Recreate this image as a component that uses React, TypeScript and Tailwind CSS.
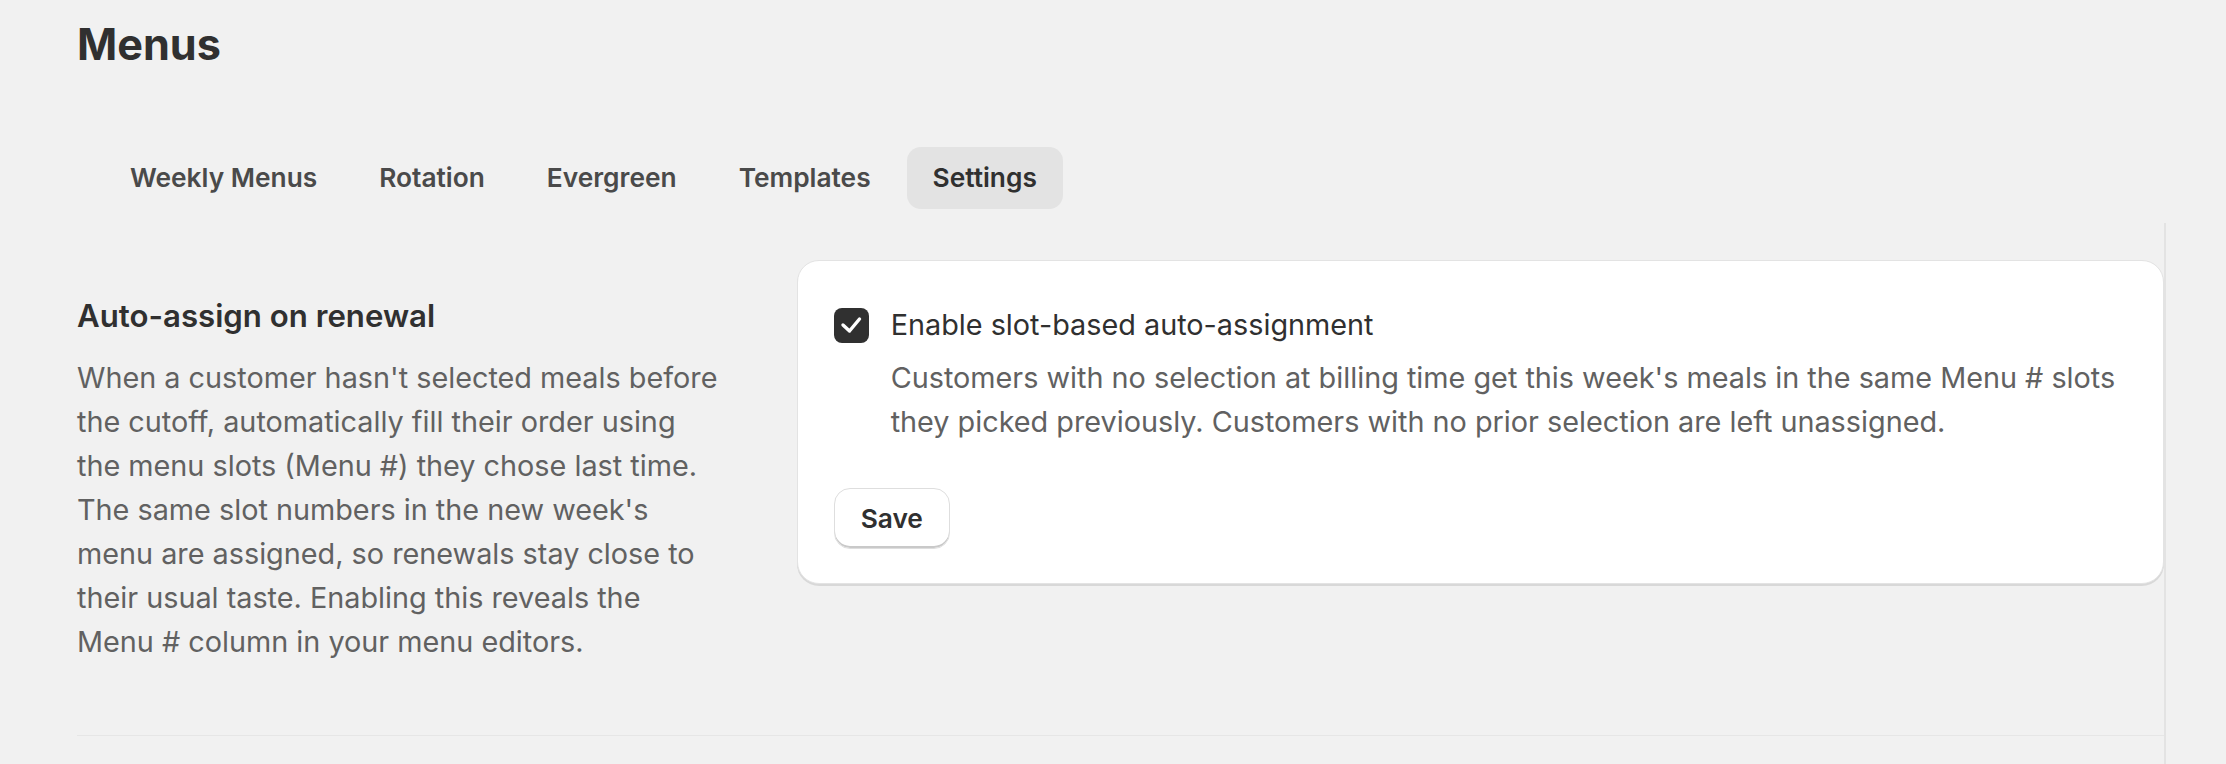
import React from "react";

const tabs = ["Weekly Menus", "Rotation", "Evergreen", "Templates", "Settings"];

export default function App() {
  return (
    <div className="min-h-screen w-full bg-[#f1f1f1] text-[#303030] font-['Inter','Noto_Sans',sans-serif]">
      <div className="pl-[77px] pr-[60px]">
        <h1 className="pt-[16px] text-[43.2px] leading-[56px] font-bold">Menus</h1>
        <nav className="mt-[75px] flex gap-[10px] pl-[27px]">
          {tabs.map((t) => {
            const active = t === "Settings";
            return (
              <button
                key={t}
                className={
                  active
                    ? "h-[62px] px-[26px] rounded-[14px] bg-[#e3e3e3] text-[26.3px] leading-[62px] font-semibold text-[#303030]"
                    : "h-[62px] px-[26px] rounded-[14px] text-[26.3px] leading-[62px] font-semibold text-[#4a4a4a]"
                }
              >
                {t}
              </button>
            );
          })}
        </nav>
        <div className="mt-[14px] min-h-[541px] border-r-2 border-[#e3e3e3]">
          <section className="grid grid-cols-[1fr_2fr] gap-[36px] py-[37px] border-b border-[#e6e6e6]">
            <div className="pt-[34px] pb-[34px] pr-[40px]">
              <h2 className="text-[31.2px] leading-[44px] font-semibold text-[#303030]">Auto-assign on renewal</h2>
              <p className="mt-[18px] text-[28.8px] leading-[44px] text-[#616161]">
                When a customer hasn't selected meals before the cutoff, automatically fill their order using the menu
                slots (Menu #) they chose last time. The same slot numbers in the new week's menu are assigned, so
                renewals stay close to their usual taste. Enabling this reveals the Menu # column in your menu editors.
              </p>
            </div>
            <div className="self-start rounded-[22px] border border-[#e3e3e3] bg-white pt-[42px] pb-[34px] pl-[36px] pr-[37px] shadow-[0_2px_0_0_rgba(0,0,0,0.1)]">
              <div className="flex items-start gap-[22px]">
                <div className="mt-[5px] flex h-[35px] w-[35px] shrink-0 items-center justify-center rounded-[8px] bg-[#303030]">
                  <svg width="35" height="35" viewBox="0 0 35 35" fill="none">
                    <path
                      d="M9 17 L15.5 23 L25.5 11"
                      stroke="white"
                      strokeWidth="3.4"
                      strokeLinecap="round"
                      strokeLinejoin="round"
                    />
                  </svg>
                </div>
                <div>
                  <div className="text-[28.8px] leading-[44px] text-[#303030]">Enable slot-based auto-assignment</div>
                  <p className="mt-[9px] text-[28.8px] leading-[44px] text-[#616161]">
                    Customers with no selection at billing time get this week's meals in the same Menu # slots they picked
                    previously. Customers with no prior selection are left unassigned.
                  </p>
                </div>
              </div>
              <button className="mt-[44px] h-[61px] px-[26px] rounded-[16px] border border-[#dedede] bg-white text-[26.3px] font-semibold text-[#303030] shadow-[inset_0_-2px_0_0_#c9c9c9]">
                Save
              </button>
            </div>
          </section>
        </div>
      </div>
    </div>
  );
}
